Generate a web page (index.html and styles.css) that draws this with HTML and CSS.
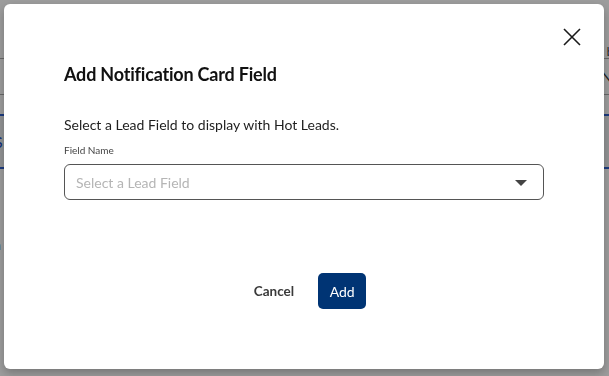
FILE: index.html
```html
<!DOCTYPE html>
<html>
<head>
    <title>Add Notification Card Field</title>
    <link rel="stylesheet" href="styles.css">
</head>
<body>
    <!-- Page behind the dialog -->
    <div class="page">
        <div class="page-row row-head"><span class="cell-left"></span><span class="cell-right">b</span></div>
        <div class="page-row row-item"><span class="cell-left"></span><span class="cell-right">N</span></div>
        <div class="page-row row-gap"></div>
        <div class="page-row row-tabs"><span class="cell-left link">S</span><span class="cell-right"></span></div>
        <div class="page-row row-text"><span class="cell-left">a</span><span class="cell-right"></span></div>
    </div>
    <div class="overlay"></div>

    <div class="modal">
        <button class="close-btn" aria-label="Close">
            <svg viewBox="0 0 18 18" width="18" height="18">
                <path d="M1 1 L17 17 M17 1 L1 17" stroke="#1a1a1a" stroke-width="1.6" fill="none"/>
            </svg>
        </button>
        <h2 class="modal-title">Add Notification Card Field</h2>
        <p class="modal-desc">Select a Lead Field to display with Hot Leads.</p>
        <label class="field-label">Field Name</label>
        <div class="select-box">
            <span class="placeholder">Select a Lead Field</span>
            <span class="caret"></span>
        </div>
        <div class="actions">
            <button class="cancel-btn">Cancel</button>
            <button class="add-btn">Add</button>
        </div>
    </div>
</body>
</html>
```

FILE: styles.css
```css
body {
    margin: 0;
    font-family: Lato, "Noto Sans", sans-serif;
    background-color: #fff;
    overflow: hidden;
    height: 376px;
}
.page {
    display: flex;
    flex-direction: column;
    padding-top: 34px;
}
.page-row {
    display: flex;
    justify-content: space-between;
    font-size: 14px;
    color: #333;
}
.row-head {
    height: 24px;
    border-bottom: 1px solid #aaa;
    font-size: 11px;
    align-items: flex-end;
}
.row-item {
    height: 35px;
    border-bottom: 1px solid #aaa;
    font-size: 16px;
    align-items: center;
}
.row-gap {
    height: 19px;
    border-bottom: 2px solid #2d5fd0;
}
.row-tabs {
    height: 51px;
    background-color: #eef0f2;
    border-bottom: 2px solid #2d5fd0;
    align-items: center;
}
.row-text {
    height: 150px;
    align-items: center;
}
.cell-left {
    margin-left: -6px;
}
.cell-right {
    margin-right: -4px;
}
.link {
    color: #1a4fc8;
    font-size: 16px;
}
.overlay {
    position: fixed;
    inset: 0;
    background-color: rgba(0, 0, 0, 0.39);
}
.modal {
    position: fixed;
    left: 4px;
    top: 4px;
    width: 600px;
    height: 365px;
    box-sizing: border-box;
    padding: 59px 60px 0 60px;
    background-color: #fff;
    border-radius: 6px;
    box-shadow: 0 4px 10px rgba(0, 0, 0, 0.25);
    display: flex;
    flex-direction: column;
}
.close-btn {
    position: absolute;
    top: 24px;
    right: 23px;
    width: 18px;
    height: 18px;
    padding: 0;
    border: none;
    background: none;
    cursor: pointer;
}
.close-btn svg {
    display: block;
}
.modal-title {
    margin: 0;
    font-size: 18px;
    font-weight: 700;
    color: #111;
    line-height: 22px;
    letter-spacing: -0.2px;
}
.modal-desc {
    margin: 30px 0 0 0;
    font-size: 14px;
    line-height: 20px;
    color: #1e1e1e;
}
.field-label {
    margin-top: 8px;
    font-size: 10px;
    line-height: 14px;
    color: #444;
}
.select-box {
    margin-top: 7px;
    height: 36px;
    box-sizing: border-box;
    border: 1px solid #555;
    border-radius: 6px;
    display: flex;
    align-items: center;
    justify-content: space-between;
    padding: 0 16px 0 11px;
}
.placeholder {
    font-size: 14px;
    color: #b5b5b5;
}
.caret {
    width: 0;
    height: 0;
    border-left: 6px solid transparent;
    border-right: 6px solid transparent;
    border-top: 6px solid #444;
    margin-top: 2px;
}
.actions {
    margin-top: 73px;
    display: flex;
    justify-content: center;
    align-items: center;
    gap: 12px;
}
.cancel-btn {
    background: none;
    border: none;
    font-family: inherit;
    font-size: 13.5px;
    font-weight: 700;
    color: #3a3a3a;
    padding: 0 12px;
    height: 36px;
    cursor: pointer;
}
.add-btn {
    background-color: #003474;
    color: #fff;
    border: none;
    border-radius: 5px;
    font-family: inherit;
    font-size: 14px;
    height: 36px;
    width: 48px;
    cursor: pointer;
}
```
